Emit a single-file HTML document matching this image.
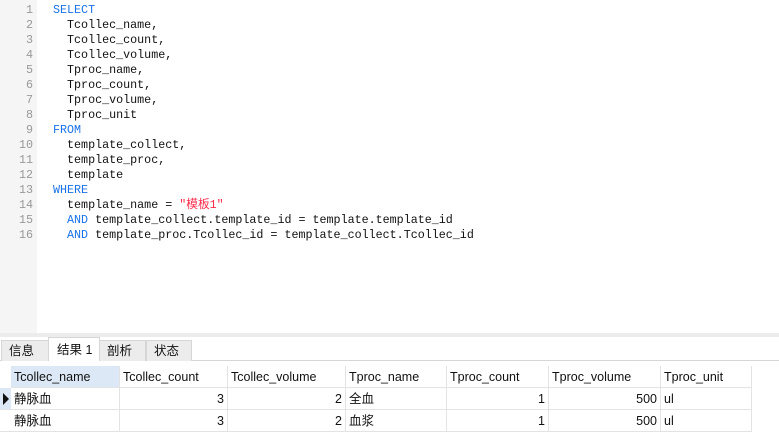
<!DOCTYPE html>
<html><head><meta charset="utf-8"><style>
*{margin:0;padding:0;box-sizing:border-box}
body{width:779px;height:438px;overflow:hidden;background:#fff;font-family:"Liberation Sans","Noto Sans CJK SC",sans-serif;position:relative}
#gut{position:absolute;left:0;top:0;width:37px;height:333px;background:#f5f5f5}
.ln{position:absolute;left:0;width:33px;text-align:right;font:11.7px/15px "Liberation Mono",monospace;color:#999}
.cl{position:absolute;left:53px;font:11.7px/15px "Liberation Mono","Noto Sans CJK SC",monospace;color:#111;white-space:pre}
.k{color:#1a73e8}.s{color:#ff2a4a}
#split{position:absolute;left:0;top:333px;width:779px;height:4px;background:#ececec}
.tab{position:absolute;top:340px;height:21px;background:#ececec;border:1px solid #d6d6d6;border-bottom:none;font-size:12.5px;line-height:20px;padding-left:7px;color:#111}
.tab.a{top:337px;height:24px;background:#fff;line-height:24px;padding-left:8px}
#tl{position:absolute;left:0;top:360px;width:779px;height:1px;background:#d6d6d6}
.c{position:absolute;height:22px;font-size:12.5px;line-height:22px;padding:0 3px;border-right:1px solid #e3e3e3;border-bottom:1px solid #e3e3e3;color:#111;white-space:nowrap;overflow:hidden}
.h{background:#fff}
.r{text-align:right}
</style></head><body>
<div id="gut"></div>
<div class="ln" style="top:3px">1</div><div class="ln" style="top:18px">2</div><div class="ln" style="top:33px">3</div><div class="ln" style="top:48px">4</div><div class="ln" style="top:63px">5</div><div class="ln" style="top:78px">6</div><div class="ln" style="top:93px">7</div><div class="ln" style="top:108px">8</div><div class="ln" style="top:123px">9</div><div class="ln" style="top:138px">10</div><div class="ln" style="top:153px">11</div><div class="ln" style="top:168px">12</div><div class="ln" style="top:183px">13</div><div class="ln" style="top:198px">14</div><div class="ln" style="top:213px">15</div><div class="ln" style="top:228px">16</div>
<div class="cl" style="top:3px"><span class="k">SELECT</span></div>
<div class="cl" style="top:18px">  Tcollec_name,</div>
<div class="cl" style="top:33px">  Tcollec_count,</div>
<div class="cl" style="top:48px">  Tcollec_volume,</div>
<div class="cl" style="top:63px">  Tproc_name,</div>
<div class="cl" style="top:78px">  Tproc_count,</div>
<div class="cl" style="top:93px">  Tproc_volume,</div>
<div class="cl" style="top:108px">  Tproc_unit</div>
<div class="cl" style="top:123px"><span class="k">FROM</span></div>
<div class="cl" style="top:138px">  template_collect,</div>
<div class="cl" style="top:153px">  template_proc,</div>
<div class="cl" style="top:168px">  template</div>
<div class="cl" style="top:183px"><span class="k">WHERE</span></div>
<div class="cl" style="top:198px">  template_name = <span class="s">"模板1"</span></div>
<div class="cl" style="top:213px">  <span class="k">AND</span> template_collect.template_id = template.template_id</div>
<div class="cl" style="top:228px">  <span class="k">AND</span> template_proc.Tcollec_id = template_collect.Tcollec_id</div>
<div id="split"></div>
<div id="tl"></div>
<div class="tab" style="left:1px;width:48px">信息</div>
<div class="tab" style="left:99px;width:47px">剖析</div>
<div class="tab" style="left:146px;width:46px">状态</div>
<div class="tab a" style="left:48px;width:52px">结果 1</div>
<div style="position:absolute;left:0;top:388px;width:11px;height:22px;background:#dce8f5;border-bottom:1px solid #e3e3e3"></div>
<div style="position:absolute;left:3px;top:393px;width:0;height:0;border-top:6px solid transparent;border-bottom:6px solid transparent;border-left:6px solid #111"></div>
<div style="position:absolute;left:0;top:410px;width:11px;height:22px;border-bottom:1px solid #e3e3e3"></div>
<div class="c h" style="left:11px;top:366px;width:109px;background:#dce8f5">Tcollec_name</div>
<div class="c h" style="left:120px;top:366px;width:108px">Tcollec_count</div>
<div class="c h" style="left:228px;top:366px;width:118px">Tcollec_volume</div>
<div class="c h" style="left:346px;top:366px;width:101px">Tproc_name</div>
<div class="c h" style="left:447px;top:366px;width:102px">Tproc_count</div>
<div class="c h" style="left:549px;top:366px;width:112px">Tproc_volume</div>
<div class="c h" style="left:661px;top:366px;width:91px">Tproc_unit</div>
<div class="c" style="left:11px;top:388px;width:109px">静脉血</div>
<div class="c r" style="left:120px;top:388px;width:108px">3</div>
<div class="c r" style="left:228px;top:388px;width:118px">2</div>
<div class="c" style="left:346px;top:388px;width:101px">全血</div>
<div class="c r" style="left:447px;top:388px;width:102px">1</div>
<div class="c r" style="left:549px;top:388px;width:112px">500</div>
<div class="c" style="left:661px;top:388px;width:91px">ul</div>
<div class="c" style="left:11px;top:410px;width:109px">静脉血</div>
<div class="c r" style="left:120px;top:410px;width:108px">3</div>
<div class="c r" style="left:228px;top:410px;width:118px">2</div>
<div class="c" style="left:346px;top:410px;width:101px">血浆</div>
<div class="c r" style="left:447px;top:410px;width:102px">1</div>
<div class="c r" style="left:549px;top:410px;width:112px">500</div>
<div class="c" style="left:661px;top:410px;width:91px">ul</div>
</body></html>
